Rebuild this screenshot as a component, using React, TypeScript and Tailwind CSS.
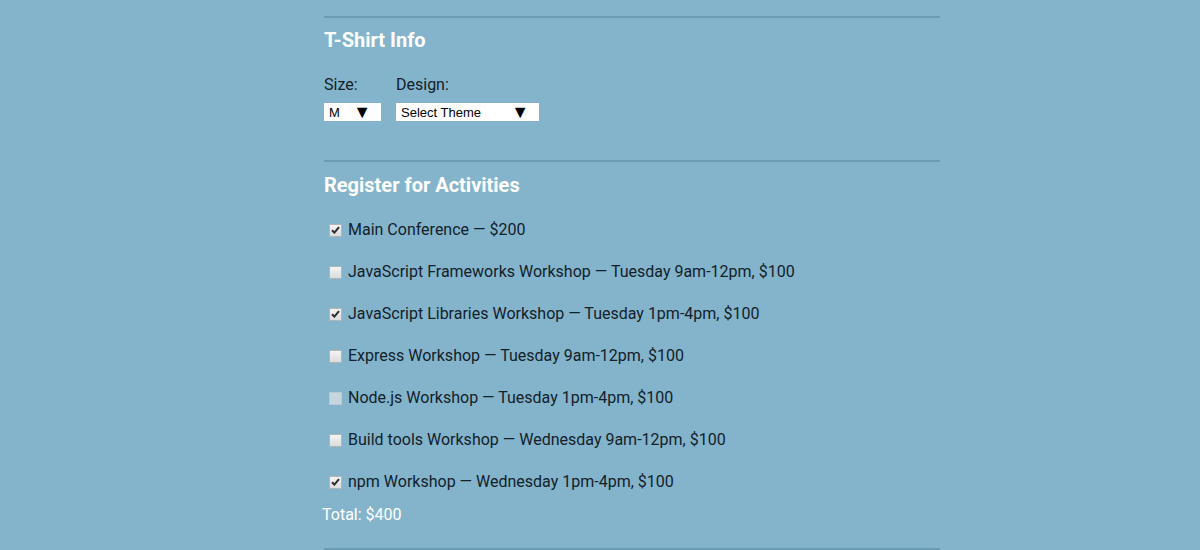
import React from "react";

const activities = [
  { label: "Main Conference — $200", checked: true },
  { label: "JavaScript Frameworks Workshop — Tuesday 9am-12pm, $100" },
  { label: "JavaScript Libraries Workshop — Tuesday 1pm-4pm, $100", checked: true },
  { label: "Express Workshop — Tuesday 9am-12pm, $100" },
  { label: "Node.js Workshop — Tuesday 1pm-4pm, $100", disabled: true },
  { label: "Build tools Workshop — Wednesday 9am-12pm, $100" },
  { label: "npm Workshop — Wednesday 1pm-4pm, $100", checked: true },
];

function Box({ checked, disabled }: { checked?: boolean; disabled?: boolean }) {
  return (
    <span
      className={
        "flex h-[13px] w-[13px] items-center justify-center border " +
        (disabled
          ? "border-[#b7c9d2] bg-[#c5d6de]"
          : "border-[#b4b4b4] bg-gradient-to-b from-[#f4f4f4] to-[#dcdcdc]")
      }
    >
      {checked && (
        <svg width="9" height="8" viewBox="0 0 9 8">
          <path d="M1 4.2 L3.4 6.6 L8 1.2" fill="none" stroke="#2a2a2a" strokeWidth="2" />
        </svg>
      )}
    </span>
  );
}

function FakeSelect({ value, width }: { value: string; width: string }) {
  return (
    <div
      className={
        "flex h-[18px] items-center justify-between bg-white pl-[5px] pr-[10px] text-[13px] leading-none text-black " +
        width
      }
      style={{ fontFamily: '"Liberation Sans", Arial, sans-serif' }}
    >
      <span>{value}</span>
      <span className="text-[18px] leading-none">▼</span>
    </div>
  );
}

export default function App() {
  return (
    <div
      className="min-h-[550px] bg-[#84b4cb] text-[#12212a]"
      style={{ fontFamily: "Roboto, sans-serif" }}
    >
      <div className="ml-[324px] w-[616px] pt-4">
        <section className="border-t-2 border-[#6a9db5]">
          <h2 className="mt-[10px] text-[20px] font-bold leading-6 text-white">T-Shirt Info</h2>
          <div className="mt-[23px] flex gap-[15px]">
            <div>
              <div className="text-[16px] leading-5">Size:</div>
              <div className="mt-[8px]">
                <FakeSelect value="M" width="w-[57px]" />
              </div>
            </div>
            <div>
              <div className="text-[16px] leading-5">Design:</div>
              <div className="mt-[8px]">
                <FakeSelect value="Select Theme" width="w-[143px]" />
              </div>
            </div>
          </div>
        </section>

        <section className="mt-[39px] border-t-2 border-[#6a9db5]">
          <h2 className="mt-[11px] text-[20px] font-bold leading-6 text-white">
            Register for Activities
          </h2>
          <ul className="mt-[23px] flex flex-col gap-[22px]">
            {activities.map((a) => (
              <li key={a.label} className="flex h-5 items-center gap-[6px] pl-[5px] text-[16px] leading-5">
                <Box checked={a.checked} disabled={a.disabled} />
                <span>{a.label}</span>
              </li>
            ))}
          </ul>
          <p className="-ml-[2px] mt-[13px] text-[16px] leading-5 text-white">Total: $400</p>
        </section>

        <div className="mt-[23px] border-t-2 border-[#6a9db5]" />
      </div>
    </div>
  );
}
